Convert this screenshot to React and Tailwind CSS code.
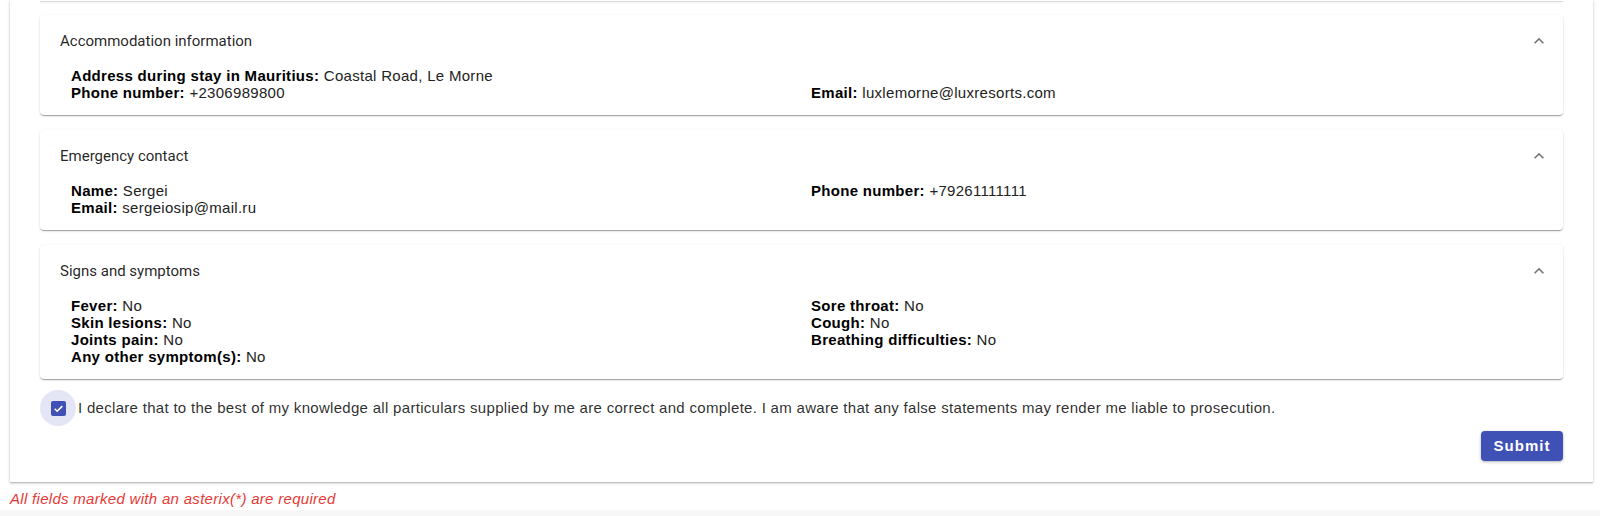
import React from "react";

const cards = [
  {
    title: "Accommodation information",
    items: [
      ["Address during stay in Mauritius:", "Coastal Road, Le Morne"],
      null,
      ["Phone number:", "+2306989800"],
      ["Email:", "luxlemorne@luxresorts.com"],
    ],
  },
  {
    title: "Emergency contact",
    items: [
      ["Name:", "Sergei"],
      ["Phone number:", "+79261111111"],
      ["Email:", "sergeiosip@mail.ru"],
      null,
    ],
  },
  {
    title: "Signs and symptoms",
    items: [
      ["Fever:", "No"],
      ["Sore throat:", "No"],
      ["Skin lesions:", "No"],
      ["Cough:", "No"],
      ["Joints pain:", "No"],
      ["Breathing difficulties:", "No"],
      ["Any other symptom(s):", "No"],
      null,
    ],
  },
];

const cardShadow =
  "shadow-[0px_2px_1px_-1px_rgba(0,0,0,0.2),0px_1px_1px_0px_rgba(0,0,0,0.14),0px_1px_3px_0px_rgba(0,0,0,0.12)]";

const ExpandLess = () => (
  <svg viewBox="0 0 24 24" className="w-[20px] h-[20px] fill-[#757575]">
    <path d="M12 8l-6 6 1.41 1.41L12 10.83l4.59 4.58L18 14z" />
  </svg>
);

const Section = ({ title, items }) => (
  <div className={`bg-white rounded-[4px] ${cardShadow} pt-[14px] pb-[14px]`}>
    <div className="flex items-center justify-between pl-[20px] pr-[14px] h-[24px]">
      <span className="font-['Roboto',sans-serif] text-[15px] tracking-normal text-[rgba(0,0,0,0.87)]">{title}</span>
      <ExpandLess />
    </div>
    <div className="grid grid-cols-[740px_1fr] pl-[31px] mt-[14px] text-[15px] leading-[17px]">
      {items.map((item, i) =>
        item ? (
          <div key={i} className="text-[#222]">
            <span className="font-bold text-black">{item[0]}</span> {item[1]}
          </div>
        ) : (
          <div key={i} />
        )
      )}
    </div>
  </div>
);

export default function App() {
  return (
    <div className="w-full h-[516px] bg-white overflow-hidden font-['Liberation_Sans',Arial,sans-serif] tracking-[0.3px] flex flex-col">
      <div className="ml-[10px] w-[1583px] bg-white shadow-[0px_1px_3px_0px_rgba(0,0,0,0.2),0px_1px_1px_0px_rgba(0,0,0,0.14)] px-[30px] pb-[21px]">
        <div className={`h-[1px] bg-white ${cardShadow}`} />
        <div className="flex flex-col gap-[15px] mt-[14px]">
          {cards.map((c) => (
            <Section key={c.title} {...c} />
          ))}
        </div>
        <div className="flex items-center mt-[11px] h-[36px]">
          <div className="w-[36px] h-[36px] rounded-full bg-[rgba(63,81,181,0.14)] flex items-center justify-center shrink-0">
            <div className="w-[15px] h-[15px] rounded-[2px] bg-[#3f51b5] flex items-center justify-center">
              <svg viewBox="0 0 24 24" className="w-[13px] h-[13px]">
                <path d="M5 12.5l4.5 4.5L19 7.5" fill="none" stroke="white" strokeWidth="3" />
              </svg>
            </div>
          </div>
          <span className="ml-[2px] text-[15px] text-[rgba(0,0,0,0.84)]">
            I declare that to the best of my knowledge all particulars supplied by me are correct and complete. I am aware that any false statements may render me liable to prosecution.
          </span>
        </div>
        <div className="flex justify-end mt-[5px]">
          <button className="w-[82px] h-[30px] rounded-[4px] bg-[#3f51b5] text-white text-[15px] font-bold tracking-[1px] shadow-[0px_1px_3px_rgba(0,0,0,0.3)]">
            Submit
          </button>
        </div>
      </div>
      <div className="pl-[10px] pt-[8px] h-[28px] text-[15px] italic text-[#e53935] leading-[17px]">
        All fields marked with an asterix(*) are required
      </div>
      <div className="flex-1 bg-[#f7f7f7]" />
    </div>
  );
}
